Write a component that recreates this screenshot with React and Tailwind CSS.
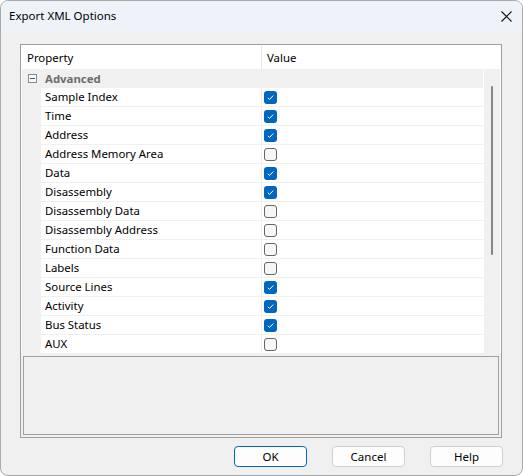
import React from 'react'

const rows = [
  { name: 'Sample Index', on: true },
  { name: 'Time', on: true },
  { name: 'Address', on: true },
  { name: 'Address Memory Area', on: false },
  { name: 'Data', on: true },
  { name: 'Disassembly', on: true },
  { name: 'Disassembly Data', on: false },
  { name: 'Disassembly Address', on: false },
  { name: 'Function Data', on: false },
  { name: 'Labels', on: false },
  { name: 'Source Lines', on: true },
  { name: 'Activity', on: true },
  { name: 'Bus Status', on: true },
  { name: 'AUX', on: false },
]

function Checkbox({ on }) {
  if (on) {
    return (
      <div className="w-[13px] h-[13px] rounded-[3px] bg-[#0067c0] flex items-center justify-center">
        <svg width="9" height="9" viewBox="0 0 9 9">
          <path d="M1.8 4.8 L3.6 6.4 L7.2 2.6" fill="none" stroke="#ffffff" strokeWidth="1" />
        </svg>
      </div>
    )
  }
  return <div className="w-[13px] h-[13px] rounded-[3px] border border-[#666666] bg-[#f6f6f6]" />
}

function Button({ label, primary }) {
  return (
    <button
      className={
        'w-[73px] h-[21px] rounded-[4px] bg-[#fdfdfd] text-[11.5px] text-black flex items-center justify-center border ' +
        (primary ? 'border-[#0067c0]' : 'border-[#d0d0d0]')
      }
    >
      {label}
    </button>
  )
}

export default function App() {
  return (
    <div
      className="w-[523px] h-[476px] bg-[#f0f0f0] border border-[#a9a9a9] rounded-[8px] overflow-hidden flex flex-col text-[11.4px] text-black"
      style={{ fontFamily: '"Noto Sans", "Liberation Sans", sans-serif' }}
    >
      {/* Title bar */}
      <div className="h-[30px] bg-[#eef3f9] flex items-center justify-between pl-[8px] pr-[10px] shrink-0">
        <span className="text-[11.5px] leading-none">Export XML Options</span>
        <svg width="11" height="11" viewBox="0 0 11 11">
          <path d="M0.5 0.5 L10.5 10.5 M10.5 0.5 L0.5 10.5" stroke="#111111" strokeWidth="1.1" />
        </svg>
      </div>

      <div className="flex-1 flex flex-col pt-[13px] pl-[19px] pr-[20px]">
        {/* Property grid panel */}
        <div className="h-[394px] border border-[#a0a0a0] bg-[#f0f0f0] flex flex-col">
          <div className="bg-white p-[1px] pb-0 flex flex-col">
            {/* header */}
            <div className="h-[23px] flex items-center bg-white">
              <div className="w-[240px] pl-[5px] h-full flex items-center border-r border-[#e5e5e5]">Property</div>
              <div className="pl-[5px]">Value</div>
            </div>
            {/* body */}
            <div className="h-[284px] flex overflow-hidden">
              <div className="w-[461px] flex flex-col">
                <div className="h-[19px] shrink-0 bg-[#f0f0f0] flex items-center">
                  <div className="w-[19px] flex justify-center pl-[1px]">
                    <svg width="9" height="9" viewBox="0 0 9 9">
                      <rect x="0.5" y="0.5" width="8" height="8" fill="#f8f8f8" stroke="#8a8a8a" />
                      <path d="M2 4.5 H7" stroke="#555555" />
                    </svg>
                  </div>
                  <span className="pl-[4px] font-bold text-[#6d6d6d]">Advanced</span>
                </div>
                {rows.map((r) => (
                  <div key={r.name} className="h-[19px] shrink-0 flex">
                    <div className="w-[19px] bg-[#f0f0f0]" />
                    <div className="flex-1 flex border-b border-[#f0f0f0] bg-white">
                      <div className="w-[221px] pl-[4px] flex items-center border-r border-[#f0f0f0]">{r.name}</div>
                      <div className="pl-[2px] flex items-center">
                        <Checkbox on={r.on} />
                      </div>
                    </div>
                  </div>
                ))}
              </div>
              {/* scrollbar */}
              <div className="w-[1px] bg-white" />
              <div className="flex-1 bg-[#f0f0f0] flex justify-center pt-[17px]">
                <div className="w-[2px] h-[169px] bg-[#858585] rounded-full" />
              </div>
            </div>
          </div>
          {/* description box */}
          <div className="mt-[3px] mx-[2px] h-[79px] border border-[#a0a0a0] bg-[#f0f0f0]" />
        </div>

        {/* buttons */}
        <div className="flex justify-end gap-[25px] mt-[8px] mr-[-1px]">
          <Button label="OK" primary />
          <Button label="Cancel" />
          <Button label="Help" />
        </div>
      </div>
    </div>
  )
}
